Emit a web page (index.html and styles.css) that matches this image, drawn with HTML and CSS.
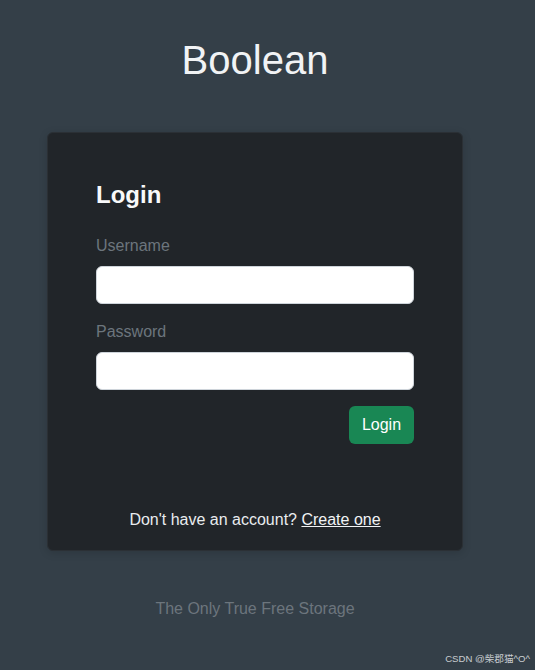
FILE: index.html
```html
<!DOCTYPE html>
<html lang="en">
<head>
    <meta charset="UTF-8">
    <meta name="viewport" content="width=device-width, initial-scale=1.0">
    <title>Boolean</title>
    <link rel="stylesheet" href="styles.css">
</head>
<body>
    <div class="page">
        <h1 class="brand">Boolean</h1>
        <div class="card">
            <h3 class="card-title">Login</h3>
            <form class="login-form">
                <label class="field-label" for="username">Username</label>
                <input class="field-input" type="text" id="username">
                <label class="field-label" for="password">Password</label>
                <input class="field-input" type="password" id="password">
                <div class="actions">
                    <button class="btn-login" type="button">Login</button>
                </div>
            </form>
            <p class="signup">Don't have an account? <a href="#">Create one</a></p>
        </div>
        <p class="tagline">The Only True Free Storage</p>
    </div>
    <span class="watermark">CSDN @柴郡猫^O^</span>
</body>
</html>
```

FILE: styles.css
```css
*{
    padding: 0;
    margin: 0;
    box-sizing: border-box;
}
body{
    background-color: #343f48;
    font-family: "Liberation Sans", Arial, "Noto Sans CJK SC", sans-serif;
    font-size: 16px;
    line-height: 1.5;
    color: #dee2e6;
    min-height: 670px;
    position: relative;
}
.page{
    width: 416px;
    margin-left: 47px;
    padding-top: 36px;
    text-align: center;
}
.brand{
    font-size: 40px;
    font-weight: 400;
    line-height: 1.2;
    color: #f1f3f5;
    margin-bottom: 48px;
}
.card{
    background-color: #212529;
    border: 1px solid #2b3035;
    border-radius: 6px;
    padding: 48px 48px 18px;
    text-align: left;
    box-shadow: 0 2px 8px rgba(0,0,0,0.15);
}
.card-title{
    font-size: 24px;
    font-weight: 700;
    line-height: 1.2;
    color: #f8f9fa;
    margin-bottom: 24px;
}
.login-form{
    display: flex;
    flex-direction: column;
}
.field-label{
    color: #6c757d;
    margin-bottom: 8px;
}
.field-input{
    height: 38px;
    border: 1px solid #ced4da;
    border-radius: 6px;
    background-color: #fff;
    padding: 6px 12px;
    font-family: inherit;
    font-size: 16px;
    margin-bottom: 16px;
}
.actions{
    display: flex;
    justify-content: flex-end;
}
.btn-login{
    height: 38px;
    width: 65px;
    padding: 6px 12px;
    border: none;
    border-radius: 6px;
    background-color: #198754;
    color: #fff;
    font-family: inherit;
    font-size: 16px;
    cursor: pointer;
}
.signup{
    text-align: center;
    margin-top: 64px;
    color: #e9ecef;
}
.signup a{
    color: #f1f3f5;
}
.tagline{
    margin-top: 46px;
    color: #6c757d;
}
.watermark{
    position: absolute;
    right: 5px;
    top: 652px;
    font-size: 9.6px;
    line-height: 14px;
    color: #c9cdd1;
}
```
